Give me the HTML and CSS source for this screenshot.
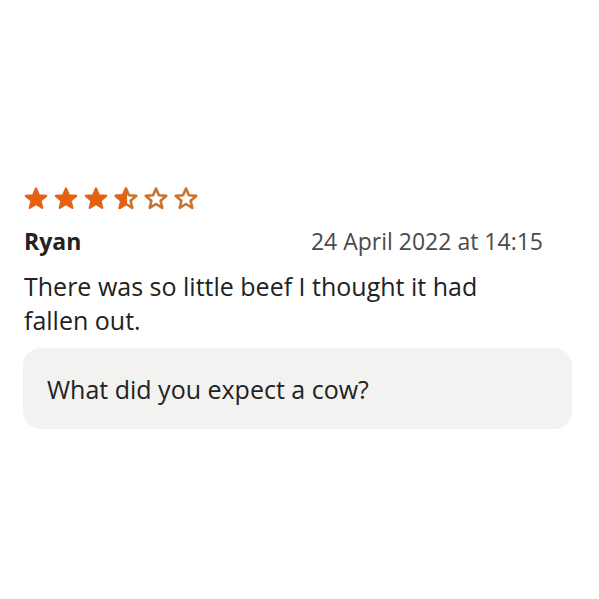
FILE: index.html
```html
<!DOCTYPE html>
<html lang="en">
<head>
<meta charset="UTF-8">
<meta name="viewport" content="width=device-width, initial-scale=1.0">
<title>Review</title>
<link rel="stylesheet" href="styles.css">
</head>
<body>

<div class="review">
    <div class="stars">
        <svg class="star" viewBox="0 0 24 24"><path class="full" d="M12 2.5l2.9 6.8 7.3.6-5.6 4.8 1.7 7.2L12 18l-6.3 3.9 1.7-7.2-5.6-4.8 7.3-.6z"/></svg>
        <svg class="star" viewBox="0 0 24 24"><path class="full" d="M12 2.5l2.9 6.8 7.3.6-5.6 4.8 1.7 7.2L12 18l-6.3 3.9 1.7-7.2-5.6-4.8 7.3-.6z"/></svg>
        <svg class="star" viewBox="0 0 24 24"><path class="full" d="M12 2.5l2.9 6.8 7.3.6-5.6 4.8 1.7 7.2L12 18l-6.3 3.9 1.7-7.2-5.6-4.8 7.3-.6z"/></svg>
        <svg class="star" viewBox="0 0 24 24">
            <path class="empty" d="M12 2.5l2.9 6.8 7.3.6-5.6 4.8 1.7 7.2L12 18l-6.3 3.9 1.7-7.2-5.6-4.8 7.3-.6z"/>
            <path class="full" d="M12 2.5L9.1 9.3l-7.3.6 5.6 4.8-1.7 7.2L12 18z"/>
        </svg>
        <svg class="star" viewBox="0 0 24 24"><path class="empty" d="M12 2.5l2.9 6.8 7.3.6-5.6 4.8 1.7 7.2L12 18l-6.3 3.9 1.7-7.2-5.6-4.8 7.3-.6z"/></svg>
        <svg class="star" viewBox="0 0 24 24"><path class="empty" d="M12 2.5l2.9 6.8 7.3.6-5.6 4.8 1.7 7.2L12 18l-6.3 3.9 1.7-7.2-5.6-4.8 7.3-.6z"/></svg>
    </div>

    <div class="review-header">
        <span class="author">Ryan</span>
        <span class="date">24 April 2022 at 14:15</span>
    </div>

    <p class="review-text">There was so little beef I thought it had fallen out.</p>

    <div class="reply">
        <p>What did you expect a cow?</p>
    </div>
</div>

</body>
</html>
```

FILE: styles.css
```css
body {
    margin: 0;
    background: #fff;
    font-family: "Open Sans", Arial, sans-serif;
    color: #222;
}

.review {
    padding: 186px 27px 0 23px;
}

.stars {
    display: flex;
    gap: 6px;
    margin-left: 1px;
}

.star {
    width: 24px;
    height: 24px;
}

.star .full {
    fill: #e8600c;
    stroke: #e0641a;
    stroke-width: 2.2;
    stroke-linejoin: round;
}

.star .empty {
    fill: #fff;
    stroke: #c8742e;
    stroke-width: 2.6;
    stroke-linejoin: round;
}

.review-header {
    display: flex;
    justify-content: space-between;
    align-items: baseline;
    margin-top: 15px;
    padding-right: 29px;
    padding-left: 1px;
}

.author {
    font-weight: 700;
    font-size: 23px;
}

.date {
    font-size: 23px;
    color: #4a4a4a;
}

.review-text {
    margin: 12px 0 0 1px;
    font-size: 25px;
    line-height: 34px;
    max-width: 480px;
}

.reply {
    margin-top: 11px;
    background: #f2f2f0;
    border-radius: 18px;
    padding: 0 24px;
    height: 81px;
    display: flex;
    align-items: center;
}

.reply p {
    margin: 0;
    font-size: 25px;
}
```
